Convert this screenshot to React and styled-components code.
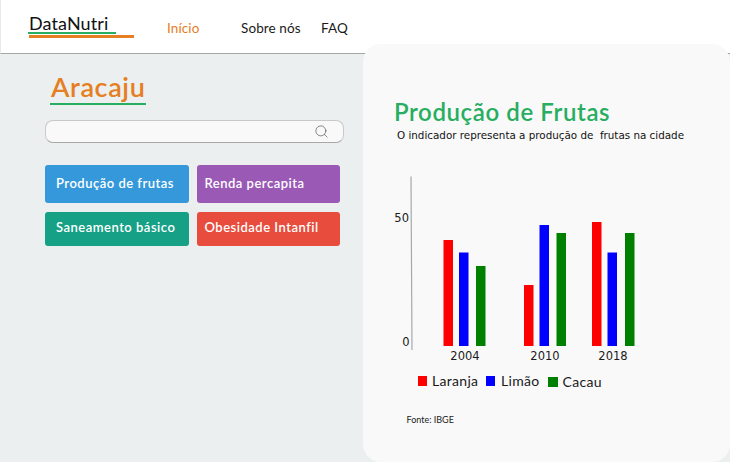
import React from "react"
import styled, { createGlobalStyle } from "styled-components"
import { Search } from "lucide-react"

const YEARS = [
  { label: "2004", x: 465, bars: [[443.5, 240], [459, 252.5], [476, 266]] },
  { label: "2010", x: 545, bars: [[524, 285], [539.5, 225], [556.5, 233]] },
  { label: "2018", x: 613, bars: [[592, 222], [607.5, 252.5], [625, 233]] },
]
const BAR_COLORS = ["#ff0000", "#0000ff", "#008000"]
const CHART_LEFT = 390
const CHART_TOP = 170

const GlobalStyle = createGlobalStyle`
  html, body {
    margin: 0;
    padding: 0;
    background: #ebeff0;
    font-family: "Lato", sans-serif;
  }
`

const App = () => (
  <Page>
    <GlobalStyle />
    <Header>
      <Logo>
        <LogoText>DataNutri</LogoText>
        <LogoGreenLine />
        <LogoOrangeLine />
      </Logo>
      <Nav>
        <NavItem $active $width="74px">Início</NavItem>
        <NavItem $width="80px">Sobre nós</NavItem>
        <NavItem>FAQ</NavItem>
      </Nav>
    </Header>
    <Main>
      <Sidebar>
        <CityTitle>Aracaju</CityTitle>
        <SearchBar>
          <Search size={15} strokeWidth={1} color="#444" />
        </SearchBar>
        <ButtonGrid>
          <IndicatorButton $color="#3498db" $inset="11px" $lift="3px">Produção de frutas</IndicatorButton>
          <IndicatorButton $color="#9b59b6" $inset="8px" $lift="3px">Renda percapita</IndicatorButton>
          <IndicatorButton $color="#16a085" $inset="11px" $lift="4px">Saneamento básico</IndicatorButton>
          <IndicatorButton $color="#e74c3c" $inset="8px" $lift="4px">Obesidade Intanfil</IndicatorButton>
        </ButtonGrid>
      </Sidebar>
      <Panel>
        <PanelTitle>Produção de Frutas</PanelTitle>
        <PanelText>O indicador representa a produção de&nbsp; frutas na cidade</PanelText>
        <Chart width="260" height="192" viewBox={`${CHART_LEFT} ${CHART_TOP} 260 192`}>
          <line x1="411" y1="176.5" x2="412" y2="350" stroke="#a8a8a8" strokeWidth="1.2" />
          <AxisLabel x="409" y="222" textAnchor="end">50</AxisLabel>
          <AxisLabel x="409.5" y="345.5" textAnchor="end">0</AxisLabel>
          {YEARS.map((year) => (
            <g key={year.label}>
              {year.bars.map(([x, top], i) => (
                <rect key={i} x={x} y={top} width="9.5" height={346 - top} fill={BAR_COLORS[i]} />
              ))}
              <AxisLabel x={year.x} y="359.5" textAnchor="middle">{year.label}</AxisLabel>
            </g>
          ))}
        </Chart>
        <Legend>
          <LegendItem $width="68px">
            <LegendSwatch $color="#ff0000" />
            Laranja
          </LegendItem>
          <LegendItem $width="62.5px" $gap="6px">
            <LegendSwatch $color="#0000ff" />
            Limão
          </LegendItem>
          <LegendItem $low>
            <LegendSwatch $color="#008000" />
            Cacau
          </LegendItem>
        </Legend>
        <Source>Fonte: IBGE</Source>
      </Panel>
    </Main>
  </Page>
)

export default App

const Page = styled.div`
  width: 730px;
  height: 462px;
  overflow: hidden;
  display: flex;
  flex-direction: column;
`

const Header = styled.header`
  box-sizing: border-box;
  height: 54px;
  flex: none;
  display: flex;
  align-items: flex-start;
  padding-left: 27px;
  background: #ffffff;
  border-left: 1px solid #e8e8e8;
  border-bottom: 1px solid #a6a6a6;
`

const Logo = styled.div`
  width: 108px;
  padding-top: 13px;
`

const LogoText = styled.div`
  font-size: 18px;
  line-height: 20px;
  letter-spacing: 0.1px;
  color: #111111;
  margin-left: 1px;
`

const LogoGreenLine = styled.div`
  width: 88px;
  height: 2px;
  margin-top: -1px;
  background: #27ae60;
`

const LogoOrangeLine = styled.div`
  width: 105px;
  height: 2.5px;
  margin: 1px 0 0 1px;
  background: #e67e22;
`

const Nav = styled.nav`
  display: flex;
  margin-left: 31px;
  padding-top: 20px;
`

const NavItem = styled.a`
  width: ${(props) => props.$width || "auto"};
  font-size: 13.5px;
  line-height: 17px;
  letter-spacing: 0.1px;
  color: ${(props) => (props.$active ? "#e67e22" : "#1a1a1a")};
`

const Main = styled.main`
  flex: 1;
  display: flex;
  min-height: 0;
`

const Sidebar = styled.section`
  box-sizing: border-box;
  width: 363px;
  flex: none;
  padding: 17px 0 0 45px;
`

const CityTitle = styled.h1`
  display: inline-block;
  margin: 0 0 15px 5px;
  padding: 0 1px;
  font-size: 27px;
  line-height: 32px;
  font-weight: 600;
  letter-spacing: 0.6px;
  color: #e67e22;
  border-bottom: 2px solid #27ae60;
`

const SearchBar = styled.div`
  box-sizing: border-box;
  width: 299px;
  height: 23px;
  display: flex;
  align-items: center;
  justify-content: flex-end;
  padding-right: 14px;
  background: #f9f9f9;
  border: 1px solid #c9c9c9;
  border-bottom-color: #a8a8a8;
  border-radius: 8px;
`

const ButtonGrid = styled.div`
  display: grid;
  grid-template-columns: 144px 143.5px;
  grid-template-rows: 38px 34px;
  column-gap: 7.5px;
  row-gap: 9px;
  margin-top: 22px;
`

const IndicatorButton = styled.div`
  display: flex;
  align-items: center;
  box-sizing: border-box;
  padding-left: ${(props) => props.$inset};
  padding-bottom: ${(props) => props.$lift};
  font-size: 13px;
  font-weight: 600;
  letter-spacing: 0.5px;
  color: #ffffff;
  background: ${(props) => props.$color};
  border-radius: 3px;
`

const Panel = styled.section`
  position: relative;
  flex: 1;
  box-sizing: border-box;
  margin-top: -10px;
  padding: 54px 0 0 31px;
  background: #f9f9f9;
  border-radius: 18px;
`

const PanelTitle = styled.h2`
  margin: 0;
  font-size: 24px;
  line-height: 28px;
  font-weight: 600;
  letter-spacing: 0.6px;
  color: #27ae60;
`

const PanelText = styled.p`
  margin: 3px 0 0 3px;
  font-family: "DejaVu Sans", sans-serif;
  font-size: 10.35px;
  line-height: 13px;
  color: #111111;
`

const Chart = styled.svg`
  display: block;
  margin: 28px 0 0 -4px;
`

const AxisLabel = styled.text`
  font-family: "DejaVu Sans", sans-serif;
  font-size: 11.5px;
  fill: #1a1a1a;
`

const Legend = styled.div`
  display: flex;
  margin: 11px 0 0 23.5px;
`

const LegendItem = styled.div`
  width: ${(props) => props.$width || "auto"};
  display: flex;
  align-items: center;
  gap: ${(props) => props.$gap || "5px"};
  font-size: 14px;
  line-height: 16px;
  letter-spacing: 0.3px;
  color: #1a1a1a;
  transform: translateY(${(props) => (props.$low ? "1px" : "0")});
`

const LegendSwatch = styled.span`
  width: 9.5px;
  height: 9.5px;
  background: ${(props) => props.$color};
`

const Source = styled.div`
  margin: 25px 0 0 12.5px;
  font-size: 9px;
  line-height: 11px;
  color: #222222;
`
